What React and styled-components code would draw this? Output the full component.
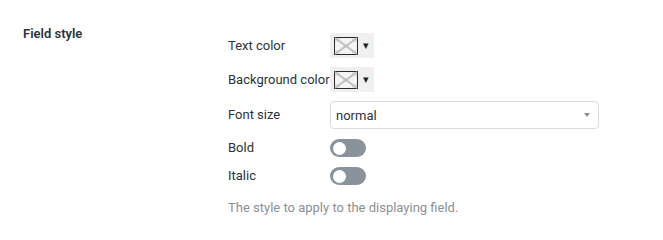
import styled, { createGlobalStyle } from "styled-components"

const GlobalStyle = createGlobalStyle`
body {
margin: 0;
background: #ffffff;
font-family: Roboto, "Noto Sans", "Liberation Sans", sans-serif;
-webkit-font-smoothing: antialiased;
}
`

const Swatch = () => (
    <svg width="24" height="18" viewBox="0 0 24 18">
        <rect x="0.5" y="0.5" width="23" height="17" fill="#f4f4f4" stroke="#2b2b2b" />
        <rect x="1" y="1" width="5" height="4" fill="#e2e2e2" />
        <rect x="18" y="1" width="5" height="4" fill="#e2e2e2" />
        <rect x="1" y="13" width="5" height="4" fill="#e2e2e2" />
        <rect x="18" y="13" width="5" height="4" fill="#e2e2e2" />
        <rect x="9" y="7" width="6" height="4" fill="#e6e6e6" />
        <line x1="1" y1="1" x2="23" y2="17" stroke="#c0c0c0" strokeWidth="2" />
        <line x1="23" y1="1" x2="1" y2="17" stroke="#c0c0c0" strokeWidth="2" />
    </svg>
)

const ColorPicker = () => (
    <PickerBox>
        <Swatch />
        <Caret>▾</Caret>
    </PickerBox>
)

const App = () => {
    return (
        <>
            <GlobalStyle />
            <Section>
                <SectionTitle>Field style</SectionTitle>
                <Fields>
                    <Row>
                        <Label>Text color</Label>
                        <ColorPicker />
                    </Row>
                    <Row>
                        <Label>Background color</Label>
                        <ColorPicker />
                    </Row>
                    <Row>
                        <Label>Font size</Label>
                        <Select>
                            <span>normal</span>
                            <SelectArrow />
                        </Select>
                    </Row>
                    <Row compact>
                        <Label>Bold</Label>
                        <Toggle />
                    </Row>
                    <Row compact>
                        <Label>Italic</Label>
                        <Toggle />
                    </Row>
                    <Help>The style to apply to the displaying field.</Help>
                </Fields>
            </Section>
        </>
    )
}
export default App

const Section = styled.div`
display: flex;
padding: 26px 0 0 23px;
`
const SectionTitle = styled.div`
width: 205px;
flex-shrink: 0;
font-size: 13px;
font-weight: 600;
line-height: 16px;
color: #2c3338;
`
const Fields = styled.div`
display: flex;
flex-direction: column;
padding-top: 7px;
gap: 9px;
`
const Row = styled.div`
display: flex;
align-items: center;
min-height: ${({ compact }) => (compact ? "18px" : "25px")};
margin-top: ${({ compact }) => (compact ? "1px" : "0")};
`
const Label = styled.div`
width: 102px;
flex-shrink: 0;
font-size: 13px;
line-height: 16px;
color: #2c3338;
white-space: nowrap;
`
const PickerBox = styled.div`
display: flex;
align-items: center;
gap: 5px;
height: 25px;
padding: 0 5px 0 4px;
background: #f0f0f0;
svg {
display: block;
}
`
const Caret = styled.span`
font-size: 11px;
color: #1e1e1e;
line-height: 1;
`
const Select = styled.div`
box-sizing: border-box;
display: flex;
align-items: center;
justify-content: space-between;
width: 269px;
height: 28px;
padding: 0 8px 0 5px;
border: 1px solid #dcdcde;
border-radius: 4px;
font-size: 13px;
color: #2c3338;
`
const SelectArrow = styled.span`
width: 0;
height: 0;
border-left: 3px solid transparent;
border-right: 3px solid transparent;
border-top: 4px solid #8c8f94;
`
const Toggle = styled.div`
position: relative;
width: 36px;
height: 18px;
border-radius: 9px;
background: #8a939c;
&::after {
content: "";
position: absolute;
left: 3px;
top: 2.5px;
width: 13px;
height: 13px;
border-radius: 50%;
background: #ffffff;
}
`
const Help = styled.div`
margin-top: 6px;
font-size: 13px;
line-height: 16px;
color: #8c8f94;
`
